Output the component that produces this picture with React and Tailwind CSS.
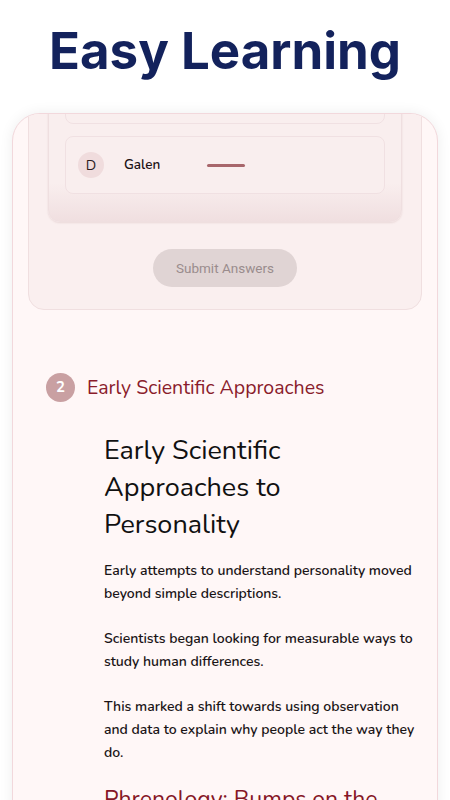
import React from 'react';

const options = [
  { letter: 'C', label: 'Hippocrates' },
  { letter: 'D', label: 'Galen' },
];

const paragraphs = [
  'Early attempts to understand personality moved beyond simple descriptions.',
  'Scientists began looking for measurable ways to study human differences.',
  'This marked a shift towards using observation and data to explain why people act the way they do.',
];

const body = { fontFamily: 'Nunito, Lato, "Open Sans", sans-serif' };

const OptionRow = ({ letter, label }) => (
  <div className="flex h-[58px] items-center rounded-lg border border-[#f0e0e2] bg-[#f9eeee] px-3">
    <div className="flex h-[26px] w-[26px] items-center justify-center rounded-full bg-[#f0dcdd] text-[14px] text-[#2a1a1c]">
      {letter}
    </div>
    <span className="ml-5 w-[83px] text-[13.5px] font-semibold text-[#1c1214]">{label}</span>
    {letter === 'D' && <span className="h-[3px] w-[38px] rounded-full bg-[#a8666b]" />}
  </div>
);

export default function App() {
  return (
    <div className="h-[800px] overflow-hidden bg-white" style={body}>
      <h1
        className="pt-[19px] text-center text-[51px] font-bold leading-[64px] text-[#13225c]"
        style={{ fontFamily: 'Inter, "Liberation Sans", sans-serif' }}
      >
        Easy Learning
      </h1>

      <div className="mx-3 mt-[30px] h-[700px] overflow-hidden rounded-t-[28px] border border-[#f2d8dc] bg-[#fff7f7] px-[15px] shadow-[0_0_14px_rgba(0,0,0,0.07)]">
        {/* quiz card, scrolled partly out of view */}
        <div className="-mt-[86px] rounded-2xl border border-[#f0dfe0] bg-[#faefef] px-[19px] pt-5 pb-[22px]">
          <div className="rounded-xl border border-[#efdfe0] bg-[linear-gradient(to_bottom,#f9eeee_78%,#f0dfe0)] px-4 pt-4 pb-[27px] shadow-[0_1px_2px_rgba(120,60,60,0.12)]">
            <div className="flex flex-col gap-3">
              {options.map((o) => (
                <OptionRow key={o.letter} {...o} />
              ))}
            </div>
          </div>
          <div className="mt-[27px] flex justify-center">
            <button
              className="h-[38px] w-[144px] rounded-full bg-[#e0d4d4] text-[13.5px] text-[#9a8c8d]"
              style={{ fontFamily: 'Roboto, sans-serif' }}
            >
              Submit Answers
            </button>
          </div>
        </div>

        {/* section 2 */}
        <div className="mt-[63px] flex items-center pl-[18px]">
          <div className="flex h-[29px] w-[29px] items-center justify-center rounded-full bg-[#c9a0a2] text-[15px] font-bold text-white">
            2
          </div>
          <span className="ml-3 text-[19.5px] text-[#8a1c2b]">Early Scientific Approaches</span>
        </div>

        <div className="pl-[76px] pr-1">
          <h2 className="mt-[30px] w-[240px] text-[27px] leading-[37px] text-[#111]">
            Early Scientific Approaches to Personality
          </h2>
          <div className="mt-[16px] flex flex-col gap-[22px]">
            {paragraphs.map((p) => (
              <p key={p} className="text-[14px] font-semibold leading-[23px] text-[#1a1416]">
                {p}
              </p>
            ))}
          </div>
          <h3 className="mt-[20px] text-[23px] leading-[32px] text-[#861626]">
            Phrenology: Bumps on the Head
          </h3>
        </div>
      </div>
    </div>
  );
}
